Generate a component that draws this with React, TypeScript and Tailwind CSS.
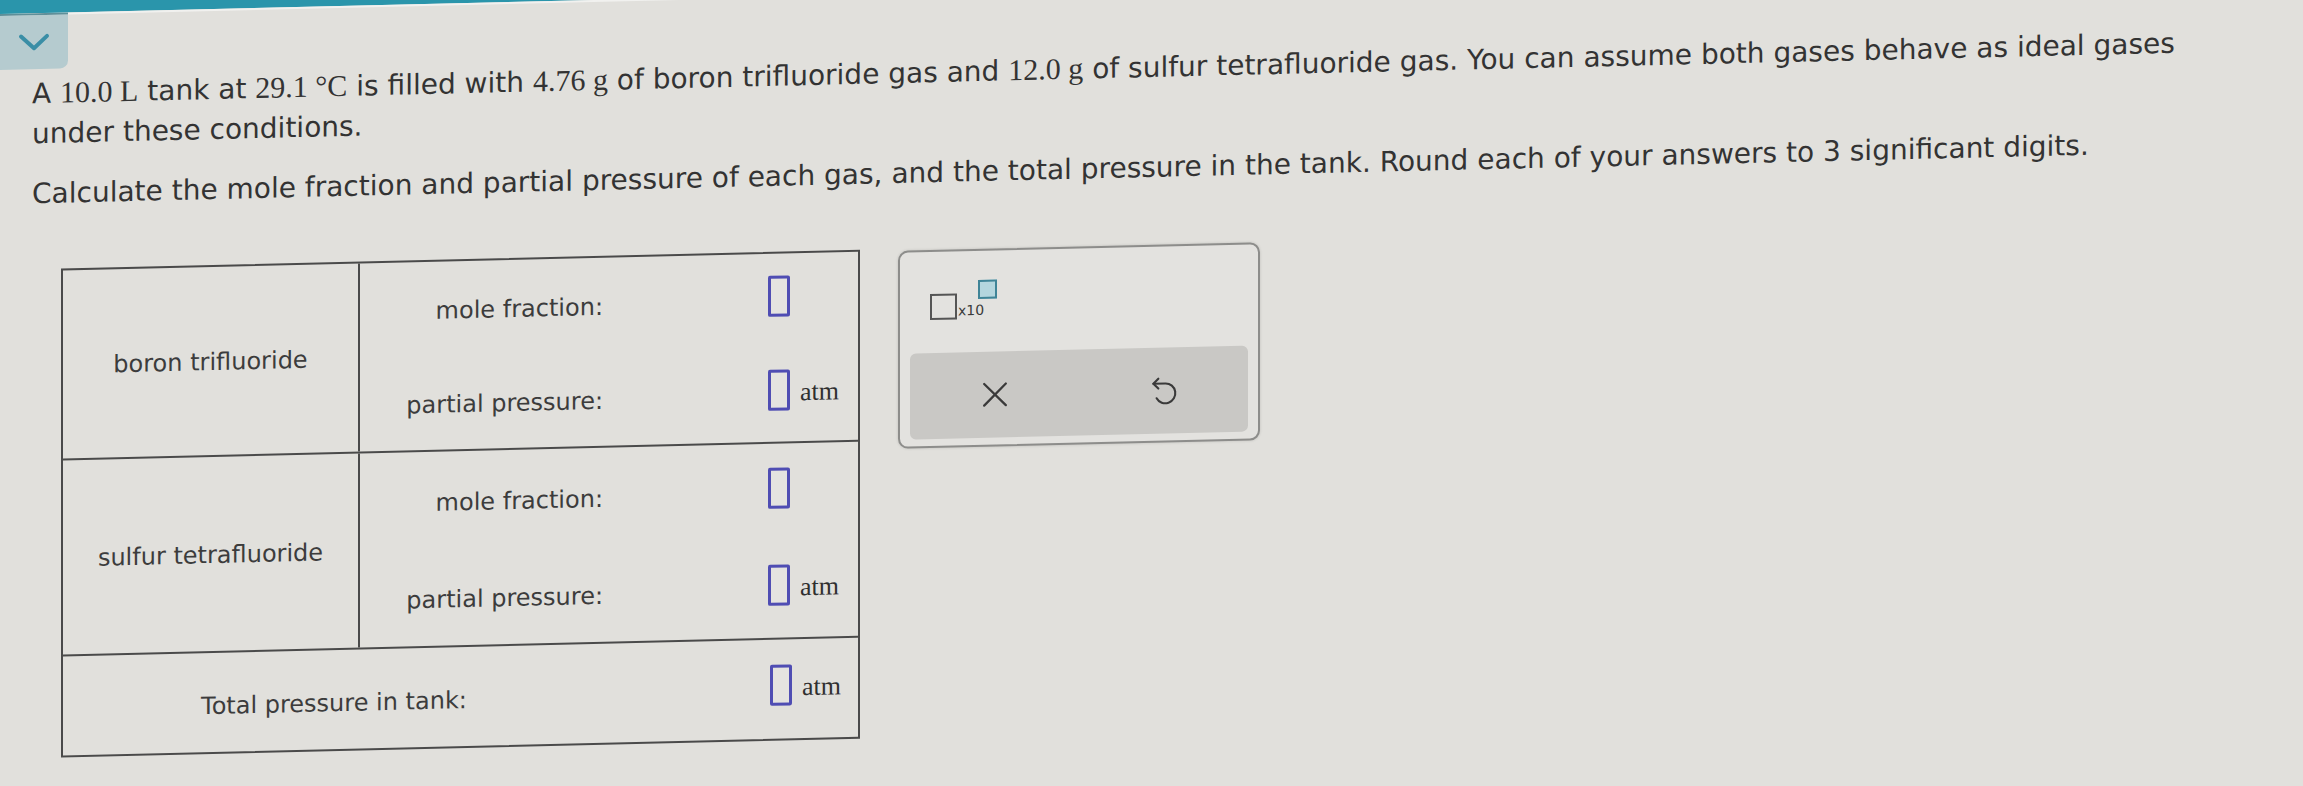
import React from "react";

const sans = "font-['DejaVu_Sans','Verdana',sans-serif]";
const serif = "font-['Liberation_Serif','Times_New_Roman',serif]";

/** serif piece of the prompt, as the math renderer draws it */
function M({ children }: { children: React.ReactNode }) {
  return <span className={`${serif} text-[30px]`}>{children}</span>;
}

/** empty answer slot */
function Slot({ unit }: { unit?: string }) {
  return (
    <div className="flex items-center">
      <div className="w-[22px] h-[41px] mb-[9px] border-[3px] border-[#4f4db3] rounded-[2px] bg-[#e4e3e0]" />
      {unit && (
        <span className={`${serif} text-[26px] leading-none text-[#2f2f2f] ml-[10px] mb-[4px]`}>
          {unit}
        </span>
      )}
    </div>
  );
}

function Line({ label, unit }: { label: string; unit?: string }) {
  return (
    <div className="flex-1 flex items-center">
      <div className="w-[243px] text-right pt-[4px]">{label}</div>
      <div className="ml-[165px]">
        <Slot unit={unit} />
      </div>
    </div>
  );
}

function GasRow({ name, h }: { name: string; h: string }) {
  return (
    <div className={`flex ${h} border-b-2 border-[#4a4a4a]`}>
      <div className="w-[297px] border-r-2 border-[#4a4a4a] flex items-center justify-center pt-[2px]">
        {name}
      </div>
      <div className="flex-1 flex flex-col">
        <Line label="mole fraction:" />
        <Line label="partial pressure:" unit="atm" />
      </div>
    </div>
  );
}

function XIcon() {
  return (
    <svg width="26" height="26" viewBox="0 0 24 24" fill="none" stroke="#3a3a3a" strokeWidth="2.1" strokeLinecap="round">
      <path d="M2 2 22 22" />
      <path d="M22 2 2 22" />
    </svg>
  );
}

function UndoIcon() {
  return (
    <svg width="34" height="34" viewBox="0 0 24 24" fill="none" stroke="#3a3a3a" strokeWidth="1.5" strokeLinecap="round" strokeLinejoin="round">
      <path d="M4.5 7H13A7 7 0 1 1 6.8 17.3" />
      <path d="M8 3.5 4.5 7 8 10.5" />
    </svg>
  );
}

export default function App() {
  return (
    <div className={`w-[2303px] h-[786px] overflow-hidden bg-[#e1e0dc] ${sans}`}>
      <div className="origin-top-left skew-y-[-1.35deg] h-[900px] bg-[#e1e0dc]">
        {/* top chrome */}
        <div className="h-[14px] bg-[#2a95ab]" />
        <div className="flex h-[56px]">
          <div className="w-[68px] h-full bg-[#b5cbcf] rounded-br-[8px] border-t-2 border-[#5f8f99] flex items-center justify-center">
            <svg width="32" height="20" viewBox="0 0 32 20" fill="none" stroke="#3a8ea6" strokeWidth="4" strokeLinecap="round" strokeLinejoin="round">
              <path d="M3 4 16 16 29 4" />
            </svg>
          </div>
          <div className="flex-1 h-[2px] bg-[#f1f1ef]" />
        </div>

        {/* prompt */}
        <div className="pl-[32px] pt-[4px] text-[28px] leading-[40px] text-[#333] whitespace-nowrap">
          <p>
            A <M>10.0 L</M> tank at <M>29.1 °C</M> is filled with <M>4.76 g</M> of boron trifluoride
            gas and <M>12.0 g</M> of sulfur tetrafluoride gas. You can assume both gases behave as ideal
            gases
            <br />
            under these conditions.
          </p>
          <p className="mt-[20px]">
            Calculate the mole fraction and partial pressure of each gas, and the total pressure in the
            tank. Round each of your answers to 3 significant digits.
          </p>

          <div className="flex items-start mt-[55px] ml-[29px] gap-[38px]">
            {/* answer table */}
            <div className="w-[799px] border-2 border-[#4a4a4a] text-[24px] leading-none text-[#3c3c3c]">
              <GasRow name="boron trifluoride" h="h-[190px]" />
              <GasRow name="sulfur tetrafluoride" h="h-[196px]" />
              <div className="flex items-center h-[99px]">
                <div className="w-[542px] text-center pt-[6px]">Total pressure in tank:</div>
                <div className="ml-[165px]">
                  <Slot unit="atm" />
                </div>
              </div>
            </div>

            {/* tools panel */}
            <div className="w-[362px] h-[198px] mt-[2px] border-2 border-[#8d8d8b] rounded-[10px] bg-[#e3e2df] px-[10px] pb-[7px] flex flex-col shadow-[0_0_3px_rgba(0,0,0,0.15)]">
              <div className="flex-1 pl-[20px] pt-[29px]">
                <div className="flex items-start">
                  <div className="w-[27px] h-[26px] mt-[13px] border-2 border-[#555]" />
                  <span className="text-[14px] leading-none text-[#3a3a3a] mt-[23px] ml-px">x10</span>
                  <div className="w-[19px] h-[19px] -ml-[6px] border-2 border-[#3f8497] bg-[#b4d6de]" />
                </div>
              </div>
              <div className="h-[86px] rounded-[6px] bg-[#c9c8c5] grid grid-cols-2 place-items-center">
                <XIcon />
                <UndoIcon />
              </div>
            </div>
          </div>
        </div>
      </div>
    </div>
  );
}
